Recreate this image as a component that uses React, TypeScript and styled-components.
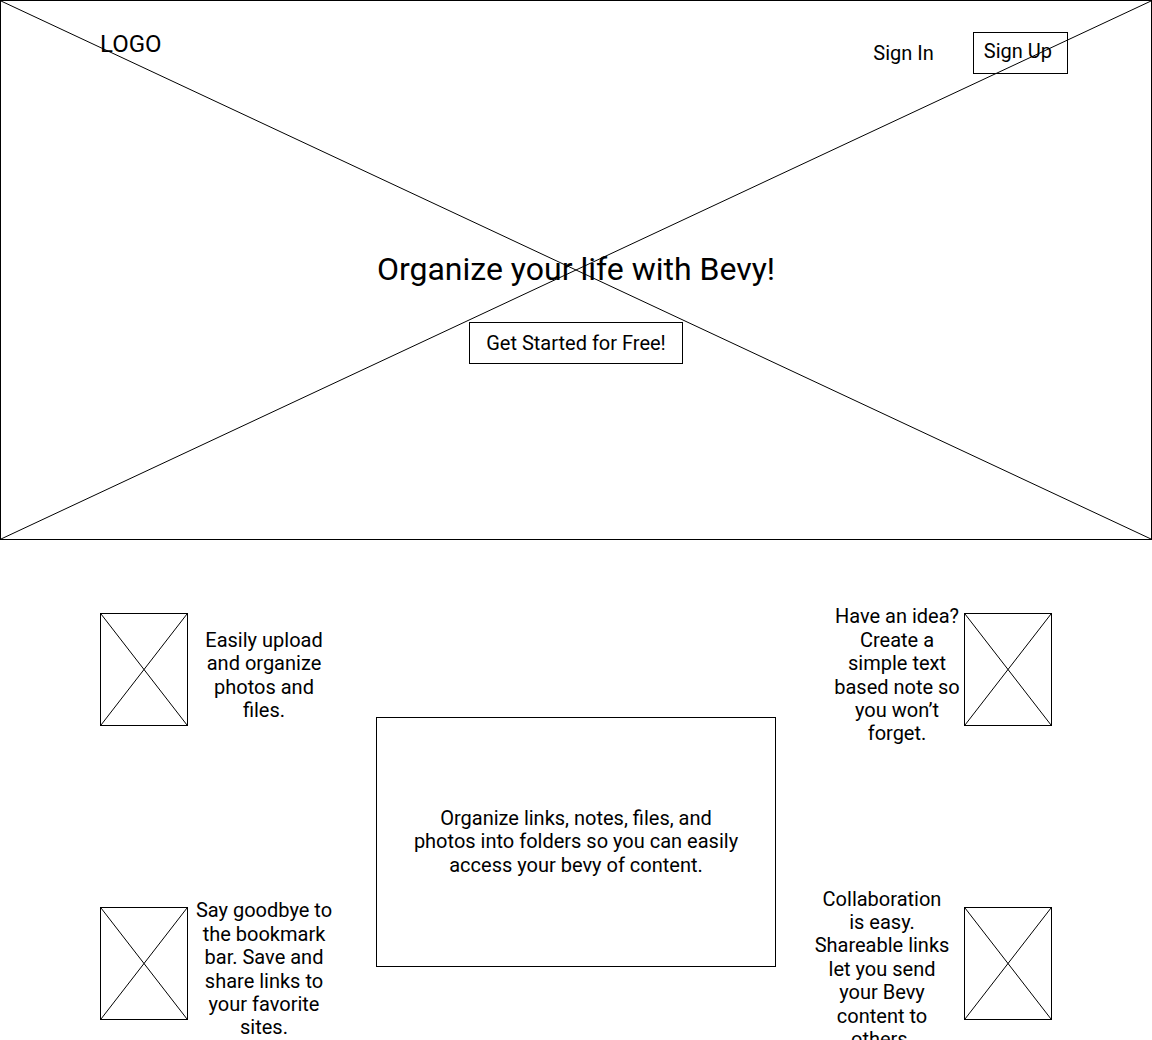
import React from "react";
import styled, {createGlobalStyle} from "styled-components";

const GlobalStyle = createGlobalStyle`
  body {
    margin: 0;
    background: #ffffff;
    color: #000000;
    font-family: Roboto, "Liberation Sans", sans-serif;
  }
`;

const Hero = styled.section`
  position: relative;
  height: 540px;
  box-sizing: border-box;
  border: 1px solid #000;
  display: flex;
  flex-direction: column;
  align-items: center;
`;

// the "X" of a wireframe image placeholder
const CrossSvg = styled.svg`
  position: absolute;
  top: 0;
  left: 0;
  width: 100%;
  height: 100%;
  display: block;
  pointer-events: none;
`;

function Cross() {
    return (
        <CrossSvg>
            <line x1="0" y1="0" x2="100%" y2="100%" stroke="#000" strokeWidth="1"/>
            <line x1="0" y1="100%" x2="100%" y2="0" stroke="#000" strokeWidth="1"/>
        </CrossSvg>
    );
}

const Header = styled.header`
  align-self: stretch;
  display: flex;
  justify-content: space-between;
  align-items: flex-start;
  padding: 29px 83px 0 99px;
`;

const Logo = styled.div`
  font-size: 24px;
`;

const Nav = styled.nav`
  display: flex;
  align-items: center;
  gap: 39px;
  margin-top: 2px;
`;

const SignIn = styled.a`
  font-size: 20px;
  line-height: 23.4px;
  color: inherit;
  text-decoration: none;
`;

const SignUp = styled.a`
  font-size: 20px;
  line-height: 23.4px;
  color: inherit;
  text-decoration: none;
  border: 1px solid #000;
  padding: 7px 15px 10px 10px;
`;

const Title = styled.h1`
  margin: 176px 0 0;
  font-size: 32px;
  font-weight: 400;
  line-height: normal;
`;

const CtaButton = styled.button`
  margin-top: 34px;
  padding: 8.5px 16px 8px;
  border: 1px solid #000;
  background: transparent;
  color: inherit;
  font-family: inherit;
  font-size: 20px;
  line-height: 23.4px;
  border-radius: 0;
`;

const Features = styled.section`
  display: flex;
  padding: 0 100px;
`;

const Column = styled.div<{ $align: string }>`
  display: flex;
  flex-direction: column;
  align-items: ${p => p.$align};
  gap: 134px;
  padding-top: 49.5px;
`;

const RightColumn = styled(Column)`
  flex: 1;
`;

const Feature = styled.div<{ $gap: number }>`
  display: flex;
  align-items: center;
  height: 160px;
  gap: ${p => p.$gap}px;
`;

const Placeholder = styled.div`
  position: relative;
  flex-shrink: 0;
  width: 88px;
  height: 113px;
  box-sizing: border-box;
  border: 1px solid #000;
`;

const FeatureText = styled.p<{ $width: number }>`
  margin: 0;
  flex-shrink: 0;
  width: ${p => p.$width}px;
  padding-top: 12px;
  font-size: 20px;
  line-height: 23.4px;
  text-align: center;
`;

const Showcase = styled.div`
  flex-shrink: 0;
  width: 400px;
  height: 250px;
  box-sizing: border-box;
  border: 1px solid #000;
  margin: 177px 0 0 42px;
  padding: 0 35px;
  display: flex;
  align-items: center;
  justify-content: center;
  text-align: center;
  font-size: 20px;
  line-height: 23.4px;
`;

export default function App() {
    return (
        <>
            <GlobalStyle/>
            <Hero>
                <Cross/>
                <Header>
                    <Logo>LOGO</Logo>
                    <Nav>
                        <SignIn href="#">Sign In</SignIn>
                        <SignUp href="#">Sign Up</SignUp>
                    </Nav>
                </Header>
                <Title>Organize your life with Bevy!</Title>
                <CtaButton>Get Started for Free!</CtaButton>
            </Hero>
            <Features>
                <Column $align="flex-start">
                    <Feature $gap={6}>
                        <Placeholder><Cross/></Placeholder>
                        <FeatureText $width={140}>Easily upload and organize photos and files.</FeatureText>
                    </Feature>
                    <Feature $gap={6}>
                        <Placeholder><Cross/></Placeholder>
                        <FeatureText $width={140}>Say goodbye to the bookmark bar. Save and share links to your favorite sites.</FeatureText>
                    </Feature>
                </Column>
                <Showcase>
                    Organize links, notes, files, and photos into folders so you can easily access your bevy of content.
                </Showcase>
                <RightColumn $align="flex-end">
                    <Feature $gap={2}>
                        <FeatureText $width={130}>Have an idea? Create a simple text based note so you won’t forget.</FeatureText>
                        <Placeholder><Cross/></Placeholder>
                    </Feature>
                    <Feature $gap={14}>
                        <FeatureText $width={136}>Collaboration is easy. Shareable links let you send your Bevy content to others.</FeatureText>
                        <Placeholder><Cross/></Placeholder>
                    </Feature>
                </RightColumn>
            </Features>
        </>
    );
}
